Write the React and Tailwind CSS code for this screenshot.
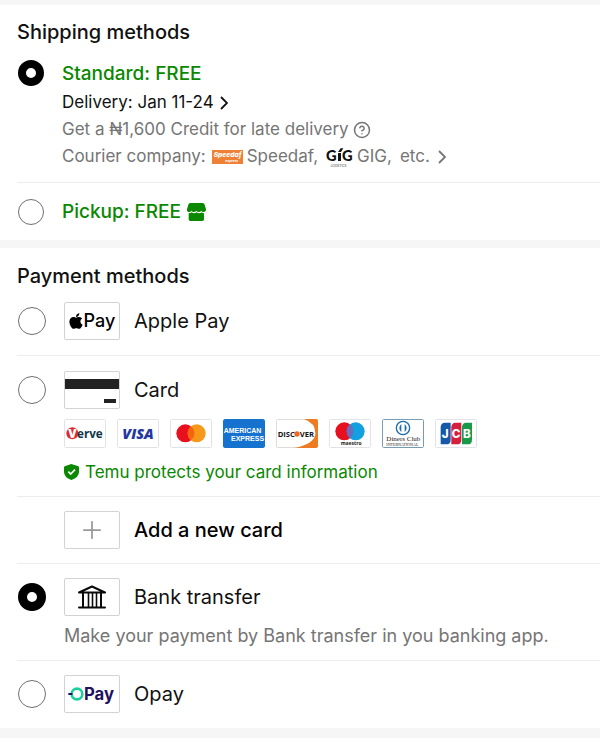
import React from "react";
import { FaApple } from "react-icons/fa";
import { CircleHelp, Plus } from "lucide-react";

const TEXT_FONT = "Inter, sans-serif";

const Radio = ({ className = "", ...props }) => (
  <input
    type="radio"
    className={`m-0 shrink-0 cursor-pointer appearance-none rounded-full border border-[#6f6f6f] bg-white checked:border-black ${className}`}
    {...props}
  />
);

const ShippingRadio = (props) => (
  <Radio name="shipping" className="size-[26px] checked:border-8" {...props} />
);

const PaymentRadio = (props) => (
  <Radio name="payment" className="size-7 checked:border-9" {...props} />
);

const IconBox = ({ children }) => (
  <span className="flex h-[38px] w-14 shrink-0 items-center justify-center overflow-hidden rounded-xs border border-[#d2d2d2] bg-white">
    {children}
  </span>
);

const Chevron = () => (
  <svg viewBox="0 0 8 14" className="h-3.5 w-2 shrink-0" fill="none" stroke="currentColor" strokeWidth="1.8" aria-hidden="true">
    <path d="m1 1 6 6-6 6" />
  </svg>
);

const StoreIcon = () => (
  <svg viewBox="0 0 57 54" className="h-[18px] w-[19px]" fill="#0a8800" aria-hidden="true">
    <path d="M10 0h37q5 0 6 5l4 14q0 8-7 8-5 0-7-4-3 4-7 4-5 0-8-4-3 4-8 4-4 0-7-4-2 4-7 4-7 0-6-8L4 5q1-5 6-5z" />
    <path d="M5 31q6 0 9-3 3 3 7 3 4 0 8-3 3 3 8 3 4 0 7-3 3 3 7 3v18q0 5-5 5H10q-5 0-5-5z" />
  </svg>
);

const SpeedafLogo = () => (
  <svg viewBox="0 0 93 42" className="h-[14px] w-[31px]" role="img" aria-label="Speedaf Express">
    <rect width="93" height="42" fill="#ee8136" />
    <text x="5" y="21" fontFamily="Inter, sans-serif" fontSize="20" fontWeight="800" fontStyle="italic" fill="#fff">
      Speedaf
    </text>
    <text x="40" y="37" fontFamily="Inter, sans-serif" fontSize="10" fontWeight="700" fontStyle="italic" fill="#fff">
      express
    </text>
  </svg>
);

const GigLogo = () => (
  <svg viewBox="0 0 81 66" className="h-[22px] w-[27px]" role="img" aria-label="GIG Logistics">
    <text x="0" y="45" fontFamily="Lato, sans-serif" fontSize="44" fontWeight="900" fill="#111">
      G
    </text>
    <path d="M36 21h9v24h-9zM36 18l8-11h8l-7 11z" fill="#111" />
    <text x="48" y="45" fontFamily="Lato, sans-serif" fontSize="44" fontWeight="900" fill="#111">
      G
    </text>
    <text x="14" y="63" fontFamily="Inter, sans-serif" fontSize="9" fill="#333">
      LOGISTICS
    </text>
  </svg>
);

const CardIcon = () => (
  <svg viewBox="0 0 56 38" className="h-[38px] w-14 shrink-0" aria-hidden="true">
    <rect y="8" width="56" height="10" fill="#222" />
    <rect x="40" y="28" width="12" height="4" fill="#222" />
  </svg>
);

const BankIcon = () => (
  <svg
    viewBox="0 0 28 24"
    className="h-6 w-7"
    fill="none"
    stroke="#0a0a0a"
    strokeWidth="2"
    strokeLinejoin="round"
    strokeLinecap="round"
    aria-hidden="true"
  >
    <path d="M1 7.5 14 1.5l13 6zM5 8v14M23 8v14M1 22.5h26" />
    <path d="M10.5 8v14M14.5 8v14M18.5 8v14" strokeWidth="1.6" />
  </svg>
);

const OpayLogo = () => (
  <svg viewBox="0 0 147 72" className="h-6 w-[49px] shrink-0" role="img" aria-label="OPay">
    <circle cx="27" cy="36" r="16" fill="none" stroke="#1dcf9f" strokeWidth="8" />
    <rect x="1" y="33" width="12" height="6" fill="#210f60" />
    <text x="48" y="54" fontFamily="Inter, sans-serif" fontSize="50" fontWeight="700" fill="#210f60">
      Pay
    </text>
  </svg>
);

const ShieldIcon = () => (
  <svg viewBox="0 0 45 48" className="h-4 w-[15px] shrink-0" aria-hidden="true">
    <path d="M22 0 43 7q2 1 2 3v14q0 16-23 24Q0 40 0 24V10q0-2 2-3z" fill="#0a8800" />
    <path d="m13 23 7 7 13-13" fill="none" stroke="#fff" strokeWidth="5" />
  </svg>
);

const BrandCard = ({ label, children }) => (
  <svg
    viewBox="0 0 126 87"
    className="h-[29px] w-[42px] rounded-xs"
    role="img"
    aria-label={label}
  >
    {children}
  </svg>
);

const Frame = ({ stroke = "#dcdce4" }) => (
  <rect x="1" y="1" width="124" height="85" rx="4" fill="#fff" stroke={stroke} strokeWidth="3" />
);

const CardBrands = () => (
  <div className="flex flex-wrap gap-[11px]">
    <BrandCard label="Verve">
      <Frame />
      <circle cx="25" cy="43" r="18" fill="#e3282c" />
      <text x="13" y="56" fontFamily="Open Sans, sans-serif" fontSize="36" fontWeight="800" fill="#fff">V</text>
      <text x="39" y="56" fontFamily="Open Sans, sans-serif" fontSize="35" fontWeight="700" fill="#0e3647">erve</text>
    </BrandCard>
    <BrandCard label="Visa">
      <Frame />
      <text x="16" y="59" fontFamily="Open Sans, sans-serif" fontSize="43" fontWeight="800" fontStyle="italic" fill="#2337a0">VISA</text>
    </BrandCard>
    <BrandCard label="Mastercard">
      <Frame />
      <circle cx="46" cy="43" r="27" fill="#e8101f" />
      <circle cx="80" cy="43" r="27" fill="#f7981b" />
      <path d="M63 22a27 27 0 0 1 0 42 27 27 0 0 1 0-42z" fill="#f66410" />
    </BrandCard>
    <BrandCard label="American Express">
      <rect width="126" height="87" rx="4" fill="#1672cf" />
      <text x="2" y="41" fontFamily="Liberation Sans, sans-serif" fontSize="21" fontWeight="700" fill="#fff">AMERICAN</text>
      <text x="24" y="67" fontFamily="Liberation Sans, sans-serif" fontSize="21" fontWeight="700" fill="#fff">EXPRESS</text>
    </BrandCard>
    <BrandCard label="Discover">
      <Frame stroke="#dcd4d0" />
      <path d="M84 0h42v87H54q64-12 64-45 0-30-34-42z" fill="#ee7a22" />
      <text x="5" y="53" fontFamily="Open Sans, sans-serif" fontSize="23" fontWeight="700" fill="#15151d">DISC</text>
      <circle cx="63" cy="45" r="8" fill="#ee6a22" />
      <text x="71" y="53" fontFamily="Open Sans, sans-serif" fontSize="23" fontWeight="700" fill="#15151d">VER</text>
    </BrandCard>
    <BrandCard label="Maestro">
      <Frame />
      <circle cx="46" cy="37" r="27" fill="#e8101f" />
      <circle cx="80" cy="37" r="27" fill="#11a0e0" />
      <path d="M63 16a27 27 0 0 1 0 42 27 27 0 0 1 0-42z" fill="#6c6bbd" />
      <text x="35" y="77" fontFamily="Open Sans, sans-serif" fontSize="15" fontWeight="700" fill="#222">maestro</text>
    </BrandCard>
    <BrandCard label="Diners Club International">
      <Frame stroke="#5d8aa6" />
      <circle cx="63" cy="27" r="20" fill="#fff" stroke="#1d6bab" strokeWidth="4" />
      <path d="M58 15q-12 12 0 25zM68 15q12 12 0 25z" fill="#1d6bab" />
      <text x="13" y="66" fontFamily="Liberation Serif, serif" fontSize="21" fill="#222">Diners Club</text>
      <text x="13" y="80" fontFamily="Liberation Serif, serif" fontSize="12" fill="#222">INTERNATIONAL</text>
    </BrandCard>
    <BrandCard label="JCB">
      <Frame />
      <path d="M30 11h17v51q0 14-13 14H17V25q0-14 13-14z" fill="#1559a8" />
      <path d="M62 11h17v51q0 14-13 14H49V25q0-14 13-14z" fill="#d51f3c" />
      <path d="M94 11h17v51q0 14-13 14H81V25q0-14 13-14z" fill="#1a9a48" />
      <text x="20" y="56" fontFamily="Inter, sans-serif" fontSize="35" fontWeight="800" fill="#fff">J</text>
      <text x="50" y="56" fontFamily="Inter, sans-serif" fontSize="35" fontWeight="800" fill="#fff">C</text>
      <text x="84" y="56" fontFamily="Inter, sans-serif" fontSize="35" fontWeight="800" fill="#fff">B</text>
    </BrandCard>
  </div>
);

const ShippingMethods = () => (
  <section className="bg-white pt-[13px] pl-[17px]">
    <h2 className="text-xl leading-7 font-medium text-[#111]">Shipping methods</h2>

    <div className="mt-3.5 flex gap-[18px] border-b border-[#ececec] pb-3 pl-px">
      <ShippingRadio id="standard" defaultChecked />
      <div className="min-w-0 text-[17px] leading-[27px] text-[#757575]">
        <label htmlFor="standard" className="mb-0.5 block text-[19px] leading-[27px] font-medium text-[#0a8800]">
          Standard: FREE
        </label>
        <button type="button" className="flex items-center gap-1.5 text-[#111]">
          Delivery: Jan 11-24
          <Chevron />
        </button>
        <p className="flex items-center gap-1">
          Get a ₦1,600 Credit for late delivery
          <CircleHelp className="size-[18px]" strokeWidth={2} />
        </p>
        <button type="button" className="flex h-[27px] items-center gap-1">
          <span className="mr-0.5">Courier company:</span>
          <SpeedafLogo />
          <span className="mr-1">Speedaf,</span>
          <GigLogo />
          <span className="mr-1">GIG,</span>
          <span className="mr-1">etc.</span>
          <Chevron />
        </button>
      </div>
    </div>

    <div className="flex h-[57px] items-center gap-[18px] pl-px">
      <ShippingRadio id="pickup" />
      <label htmlFor="pickup" className="flex items-center gap-1.5 text-[19px] leading-[27px] font-medium text-[#0a8800]">
        Pickup: FREE
        <StoreIcon />
      </label>
    </div>
  </section>
);

const PaymentRow = ({ id, label, icon, defaultChecked }) => (
  <div className="flex items-center gap-[18px] pl-px">
    <PaymentRadio id={id} defaultChecked={defaultChecked} />
    <label htmlFor={id} className="flex items-center gap-3.5 text-xl leading-7 text-[#111]">
      <IconBox>{icon}</IconBox>
      {label}
    </label>
  </div>
);

const PaymentMethods = () => (
  <section className="bg-white pt-3.5 pl-[17px]">
    <h2 className="text-xl leading-7 font-medium text-[#111]">Payment methods</h2>

    <div className="border-b border-[#ececec] pt-3 pb-[15px]">
      <PaymentRow
        id="apple-pay"
        label="Apple Pay"
        icon={
          <span className="flex items-center gap-px text-lg font-medium text-black">
            <FaApple className="h-[18px] w-3.5" />
            Pay
          </span>
        }
      />
    </div>

    <div className="border-b border-[#ececec] pt-[15px] pb-3">
      <PaymentRow id="card" label="Card" icon={<CardIcon />} />
      <div className="mt-2.5 pl-[47px]">
        <CardBrands />
        <p className="mt-3 flex items-center gap-1.5 text-[17px] leading-6 text-[#0a8800]">
          <ShieldIcon />
          Temu protects your card information
        </p>
      </div>
    </div>

    <div className="border-b border-[#ececec] py-3.5 pl-[47px]">
      <button type="button" className="flex items-center gap-3.5 text-xl leading-7 font-medium text-black">
        <IconBox>
          <Plus className="size-7 text-[#999]" strokeWidth={1.5} />
        </IconBox>
        Add a new card
      </button>
    </div>

    <div className="border-b border-[#ececec] pt-3.5 pb-[11px]">
      <PaymentRow id="bank-transfer" label="Bank transfer" icon={<BankIcon />} defaultChecked />
      <p className="mt-[7px] pl-[47px] text-lg leading-[26px] text-[#757575]">
        Make your payment by Bank transfer in you banking app.
      </p>
    </div>

    <div className="pt-3.5 pb-[15px]">
      <PaymentRow id="opay" label="Opay" icon={<OpayLogo />} />
    </div>
  </section>
);

export default function App() {
  return (
    <main className="min-h-screen bg-white" style={{ fontFamily: TEXT_FONT }}>
      <div className="border-t-[5px] border-b-10 border-[#f6f6f6]">
        <ShippingMethods />
        <div className="h-2 bg-[#f6f6f6]" />
        <PaymentMethods />
      </div>
    </main>
  );
}
